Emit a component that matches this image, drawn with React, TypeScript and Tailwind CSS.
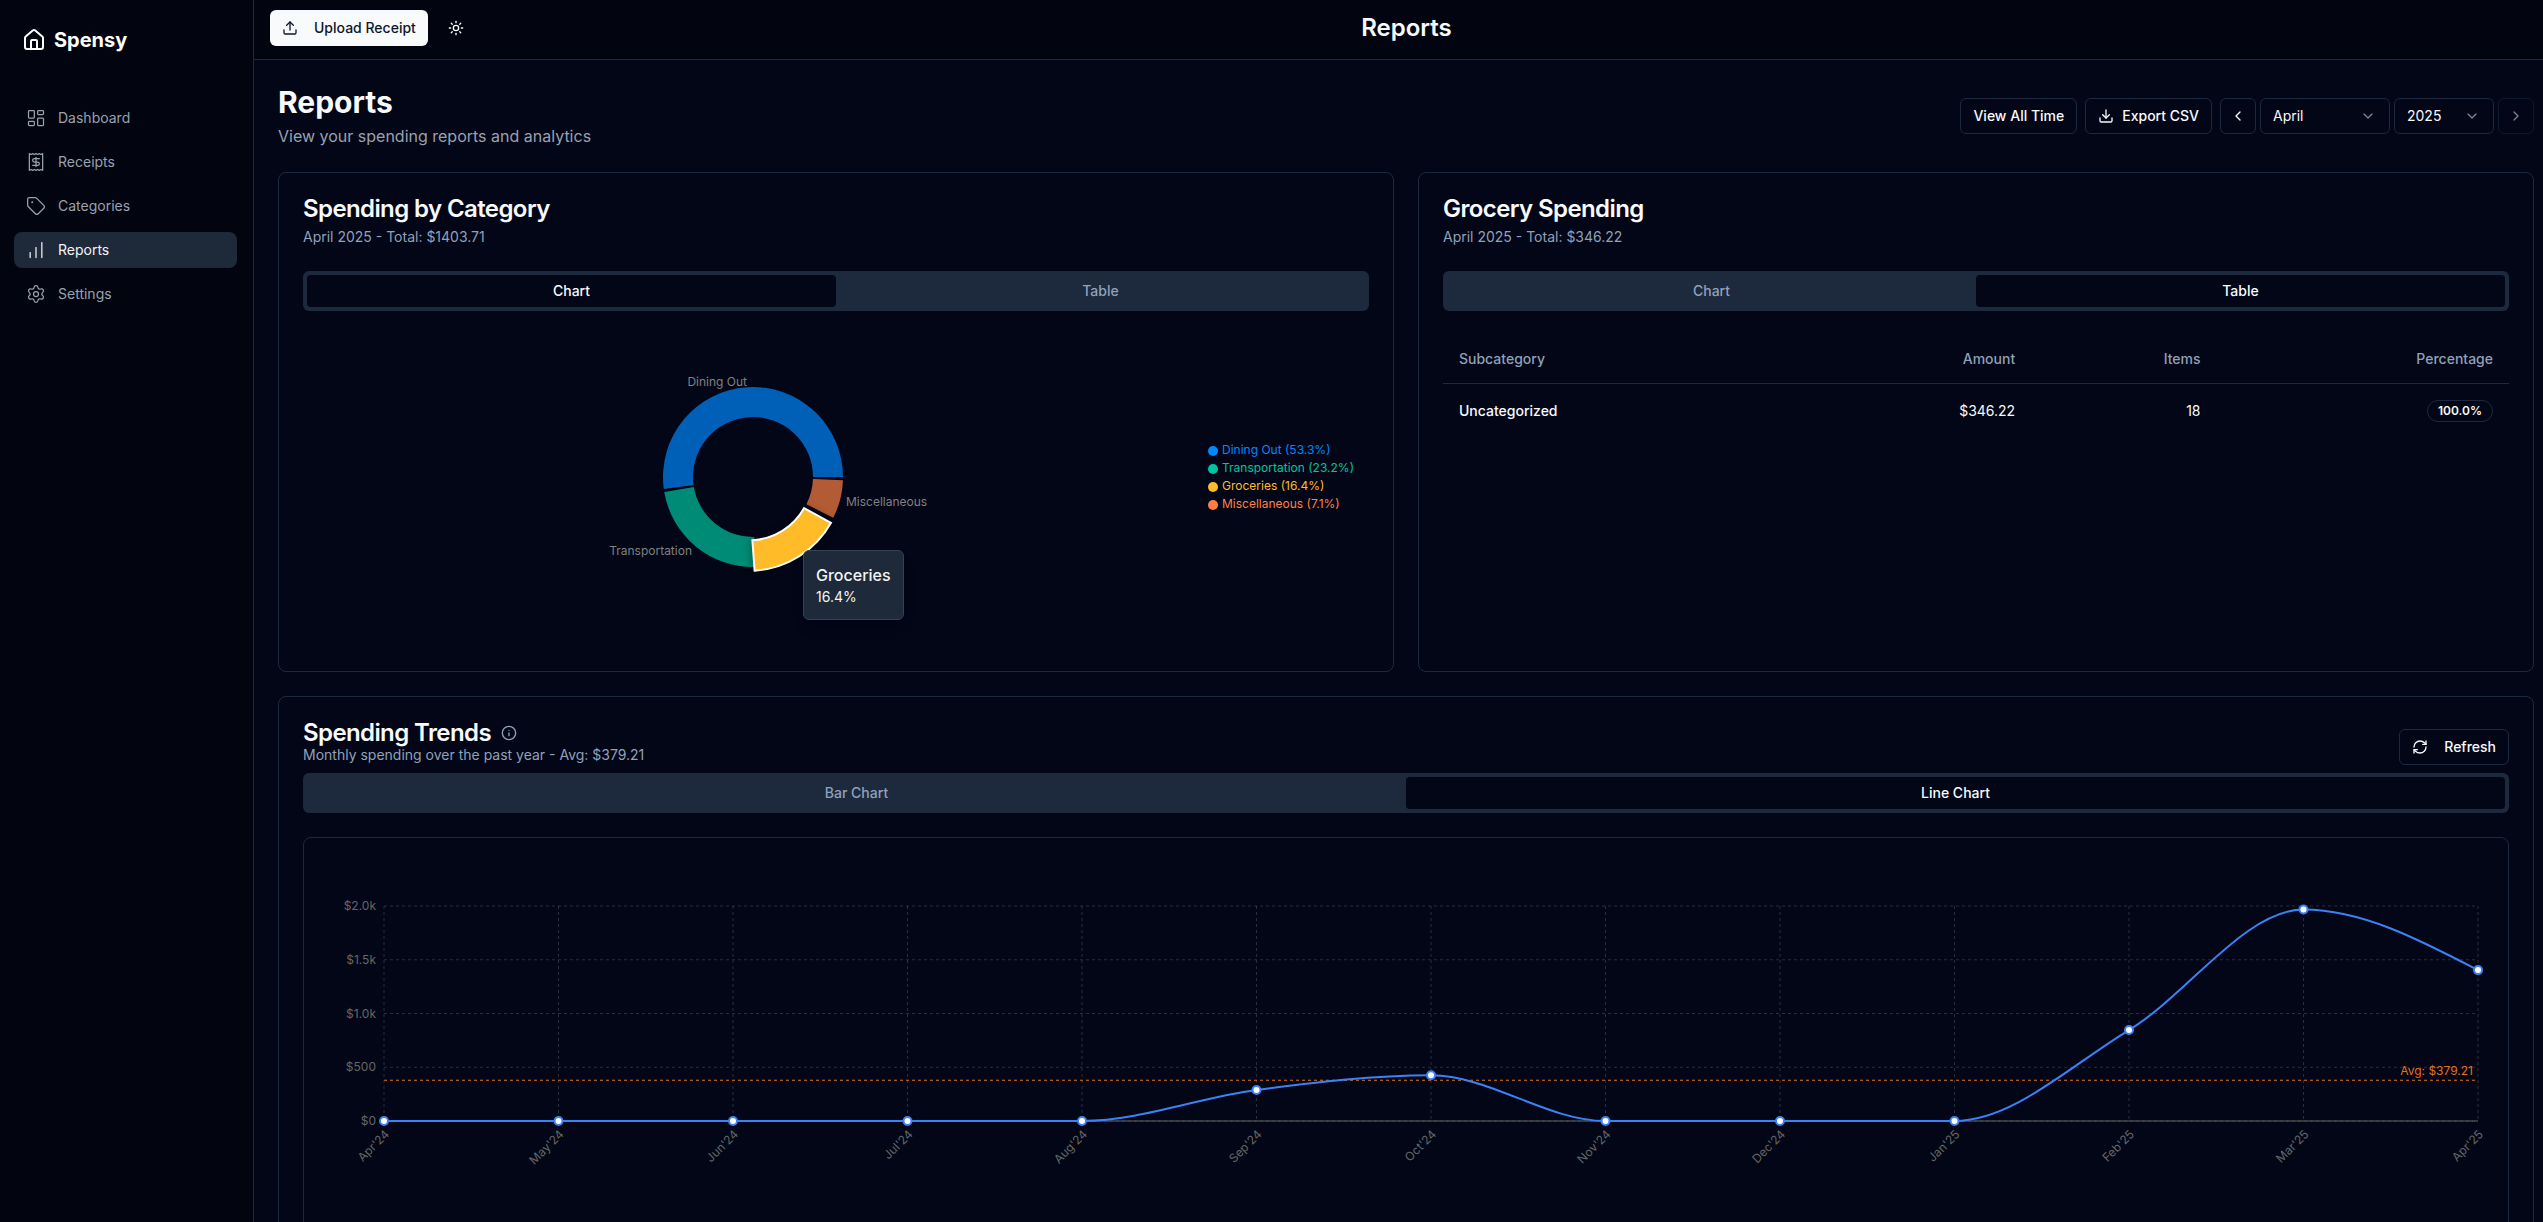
import React, { useLayoutEffect, useRef, useState } from 'react';
import {
  ChartNoAxesColumnIncreasing,
  ChevronDown,
  ChevronLeft,
  ChevronRight,
  Download,
  House,
  Info,
  LayoutDashboard,
  Receipt,
  RefreshCw,
  Settings,
  Sun,
  Tag,
  Upload,
} from 'lucide-react';

const navItems = [
  { label: 'Dashboard', icon: LayoutDashboard },
  { label: 'Receipts', icon: Receipt },
  { label: 'Categories', icon: Tag },
  { label: 'Reports', icon: ChartNoAxesColumnIncreasing, active: true },
  { label: 'Settings', icon: Settings },
];

const categories = [
  { name: 'Dining Out', percent: 53.3, color: '#0088FE' },
  { name: 'Transportation', percent: 23.2, color: '#00C49F' },
  { name: 'Groceries', percent: 16.4, color: '#FFBB28' },
  { name: 'Miscellaneous', percent: 7.1, color: '#FF8042' },
];

const trends = [
  { month: "Apr'24", total: 0 },
  { month: "May'24", total: 0 },
  { month: "Jun'24", total: 0 },
  { month: "Jul'24", total: 0 },
  { month: "Aug'24", total: 0 },
  { month: "Sep'24", total: 288 },
  { month: "Oct'24", total: 425 },
  { month: "Nov'24", total: 0 },
  { month: "Dec'24", total: 0 },
  { month: "Jan'25", total: 0 },
  { month: "Feb'25", total: 846 },
  { month: "Mar'25", total: 1967 },
  { month: "Apr'25", total: 1403.71 },
];

const yTicks = [
  { value: 0, label: '$0' },
  { value: 500, label: '$500' },
  { value: 1000, label: '$1.0k' },
  { value: 1500, label: '$1.5k' },
  { value: 2000, label: '$2.0k' },
];

const average = 379.21;

const outlineButton =
  'flex h-9 items-center gap-2 rounded-md border border-slate-800 px-3 text-sm font-medium text-slate-50 hover:bg-slate-800';

type Point = { x: number; y: number };

// Monotone cubic interpolation, so the curve never dips below zero
const monotonePath = (pts: Point[]) => {
  const n = pts.length;
  const slopes = pts.slice(1).map((p, i) => (p.y - pts[i].y) / (p.x - pts[i].x));
  const tangents = pts.map((_, i) => {
    if (i === 0 || i === n - 1) return 0;
    const a = slopes[i - 1];
    const b = slopes[i];
    if (a * b <= 0) return 0;
    return Math.sign(a) * Math.min(Math.abs(a), Math.abs(b), Math.abs(a + b) / 4) * 2;
  });
  tangents[0] = (3 * slopes[0] - tangents[1]) / 2;
  tangents[n - 1] = (3 * slopes[n - 2] - tangents[n - 2]) / 2;
  let d = `M${pts[0].x},${pts[0].y}`;
  for (let i = 1; i < n; i++) {
    const h = (pts[i].x - pts[i - 1].x) / 3;
    d += `C${pts[i - 1].x + h},${pts[i - 1].y + h * tangents[i - 1]},${pts[i].x - h},${pts[i].y - h * tangents[i]},${pts[i].x},${pts[i].y}`;
  }
  return d;
};

const sectorPath = (start: number, end: number, inner: number, outer: number) => {
  const at = (deg: number, r: number) => {
    const rad = (deg * Math.PI) / 180;
    return `${r * Math.cos(rad)},${-r * Math.sin(rad)}`;
  };
  const large = end - start > 180 ? 1 : 0;
  return `M${at(start, outer)}A${outer},${outer},0,${large},0,${at(end, outer)}L${at(end, inner)}A${inner},${inner},0,${large},1,${at(start, inner)}Z`;
};

const Tabs: React.FC<{ items: string[]; active: string }> = ({ items, active }) => (
  <div role="tablist" className="grid h-10 grid-cols-2 rounded-md bg-slate-800 p-1">
    {items.map((item) => (
      <button
        key={item}
        role="tab"
        aria-selected={item === active}
        className={
          item === active
            ? 'rounded-sm bg-[#020617] text-sm font-medium text-slate-50'
            : 'rounded-sm text-sm font-medium text-slate-400'
        }
      >
        {item}
      </button>
    ))}
  </div>
);

const DonutChart: React.FC = () => {
  const gap = 2;
  const available = 360 - gap * categories.length;
  let angle = 0;
  const sectors = categories.map((c) => {
    const start = angle;
    const end = start + (available * c.percent) / 100;
    angle = end + gap;
    return { ...c, start, end };
  });

  return (
    <div className="mt-4 flex h-[300px] items-center">
      <div className="relative flex flex-1 justify-center">
        <svg width="400" height="300" viewBox="-200 -150 400 300" className="overflow-visible text-xs">
          {sectors
            .filter((s) => s.name !== 'Groceries')
            .map((s) => (
              <path key={s.name} d={sectorPath(s.start, s.end, 60, 90)} fill={s.color} opacity="0.7" />
            ))}
          <path
            d="M1.6 93.8A94.5 94.5 0 0 0 78 45.8L51 31.2A63 63 0 0 1 -0.6 63.2Z"
            fill="#FFBB28"
            stroke="#fff"
            strokeWidth="2"
            className="drop-shadow-[0_0_4px_rgba(0,0,0,0.4)]"
          />
          <text x="-6" y="-91" textAnchor="end" fill="#808080">Dining Out</text>
          <text x="-61" y="78" textAnchor="end" fill="#808080">Transportation</text>
          <text x="93" y="29" fill="#808080">Miscellaneous</text>
        </svg>
        <div className="absolute top-[223px] left-1/2 ml-[50px] rounded-md border border-gray-700 bg-gray-800 p-3 text-gray-100 shadow-lg">
          <p className="font-medium">Groceries</p>
          <p className="text-sm">16.4%</p>
        </div>
      </div>
      <ul className="w-[166px] pl-[5px] text-xs">
        {categories.map((c) => (
          <li key={c.name} className="flex h-[18px] items-center gap-1" style={{ color: c.color }}>
            <span className="mt-0.5 size-2.5 rounded-full bg-current" />
            {c.name} ({c.percent}%)
          </li>
        ))}
      </ul>
    </div>
  );
};

const TrendChart: React.FC = () => {
  const ref = useRef<HTMLDivElement>(null);
  const [width, setWidth] = useState(2172);

  useLayoutEffect(() => {
    const el = ref.current;
    if (!el) return;
    const observer = new ResizeObserver(() => setWidth(el.clientWidth));
    observer.observe(el);
    setWidth(el.clientWidth);
    return () => observer.disconnect();
  }, []);

  const left = 64;
  const right = width - 14;
  const top = 52;
  const bottom = 267;
  const x = (i: number) => left + ((right - left) * i) / (trends.length - 1);
  const y = (v: number) => bottom - ((bottom - top) * v) / 2000;
  const points = trends.map((t, i) => ({ x: x(i), y: y(t.total) }));

  return (
    <div ref={ref}>
      <svg width={width} height="400" className="block text-xs">
        <g stroke="#ccc" strokeOpacity="0.2" strokeDasharray="3 3">
          {yTicks.map((t) => (
            <line key={t.label} x1={left} x2={right} y1={y(t.value)} y2={y(t.value)} />
          ))}
          {trends.map((t, i) => (
            <line key={t.month} x1={x(i)} x2={x(i)} y1={top} y2={bottom} />
          ))}
        </g>
        <line x1={left} x2={right} y1={bottom} y2={bottom} stroke="#666" />
        {yTicks.map((t) => (
          <text key={t.label} x={left - 8} y={y(t.value) + 4} textAnchor="end" fill="#666">
            {t.label}
          </text>
        ))}
        {trends.map((t, i) => (
          <text
            key={t.month}
            x={x(i)}
            y={bottom + 8}
            dy="0.71em"
            textAnchor="end"
            fill="#666"
            transform={`rotate(-45 ${x(i)} ${bottom + 8})`}
          >
            {t.month}
          </text>
        ))}
        <line x1={left} x2={right} y1={y(average)} y2={y(average)} stroke="#e8701a" strokeDasharray="3 3" />
        <text x={right - 5} y={y(average) - 5} textAnchor="end" fill="#e8701a">
          Avg: ${average}
        </text>
        <path d={monotonePath(points)} fill="none" stroke="#3b82f6" strokeWidth="2" />
        {points.map((p) => (
          <circle key={p.x} cx={p.x} cy={p.y} r="4" fill="#fff" stroke="#3b82f6" strokeWidth="2" />
        ))}
      </svg>
    </div>
  );
};

const Sidebar: React.FC = () => (
  <aside className="flex w-[254px] shrink-0 flex-col border-r border-gray-800 bg-[#02050f] pr-4 pl-3.5">
    <a href="#" className="flex h-20 items-center gap-2 px-2 text-xl font-bold text-white">
      <House className="size-6" />
      Spensy
    </a>
    <nav className="mt-5 space-y-2">
      {navItems.map(({ label, icon: Icon, active }) => (
        <a
          key={label}
          href="#"
          className={
            active
              ? 'flex h-9 items-center gap-3 rounded-lg bg-gray-800 px-3 text-sm text-gray-100'
              : 'flex h-9 items-center gap-3 rounded-lg px-3 text-sm text-gray-400'
          }
        >
          <Icon className="size-5" strokeWidth={1.5} />
          {label}
        </a>
      ))}
    </nav>
  </aside>
);

const ReportsPage: React.FC = () => {
  return (
    <div className="flex h-screen overflow-hidden bg-[#020617] font-['Inter',sans-serif] text-slate-50">
      <Sidebar />
      <div className="flex min-w-0 flex-1 flex-col">
        <header className="grid h-15 shrink-0 grid-cols-[1fr_auto_1fr] items-center border-b border-gray-800 bg-[#02050f] pb-1 pl-4">
          <div className="flex items-center gap-2">
            <button className="flex h-9 items-center gap-4 rounded-md bg-slate-50 px-3 text-sm font-medium text-slate-900">
              <Upload className="size-4" />
              Upload Receipt
            </button>
            <button aria-label="Toggle theme" className="flex size-10 items-center justify-center">
              <Sun className="size-4" />
            </button>
          </div>
          <p className="text-2xl font-semibold">Reports</p>
        </header>

        <main className="min-h-0 flex-1 space-y-6 overflow-y-auto pt-6 pr-[9px] pl-6 [scrollbar-width:none]">
          <div className="flex items-center justify-between">
            <div>
              <h1 className="text-3xl font-bold">Reports</h1>
              <p className="mt-1 text-gray-400">View your spending reports and analytics</p>
            </div>
            <div className="flex items-center gap-2">
              <button className={outlineButton}>View All Time</button>
              <button className={outlineButton}>
                <Download className="size-4" />
                Export CSV
              </button>
              <div className="flex gap-1">
                <button
                  aria-label="Previous month"
                  className="flex size-9 items-center justify-center rounded-md border border-slate-800"
                >
                  <ChevronLeft className="size-4" />
                </button>
                <div className="relative w-[130px]">
                  <select
                    aria-label="Month"
                    className="h-9 w-full appearance-none rounded-md border border-slate-800 bg-[#020617] px-3 text-sm"
                  >
                    <option>April</option>
                  </select>
                  <ChevronDown className="pointer-events-none absolute top-2.5 right-3.5 size-4 opacity-50" />
                </div>
                <div className="relative w-[100px]">
                  <select
                    aria-label="Year"
                    className="h-9 w-full appearance-none rounded-md border border-slate-800 bg-[#020617] px-3 text-sm"
                  >
                    <option>2025</option>
                  </select>
                  <ChevronDown className="pointer-events-none absolute top-2.5 right-3.5 size-4 opacity-50" />
                </div>
                <button
                  aria-label="Next month"
                  disabled
                  className="flex size-9 items-center justify-center rounded-md border border-slate-800 opacity-50"
                >
                  <ChevronRight className="size-4" />
                </button>
              </div>
            </div>
          </div>

          <div className="grid grid-cols-2 gap-6">
            <section className="min-h-[500px] rounded-lg border border-slate-800 p-6">
              <h2 className="text-2xl leading-none font-semibold tracking-tight">Spending by Category</h2>
              <p className="mt-1.5 mb-6 text-sm text-slate-400">April 2025 - Total: $1403.71</p>
              <Tabs items={['Chart', 'Table']} active="Chart" />
              <DonutChart />
            </section>

            <section className="rounded-lg border border-slate-800 p-6">
              <h2 className="text-2xl leading-none font-semibold tracking-tight">Grocery Spending</h2>
              <p className="mt-1.5 mb-6 text-sm text-slate-400">April 2025 - Total: $346.22</p>
              <Tabs items={['Chart', 'Table']} active="Table" />
              <table className="mt-6 w-full text-sm">
                <thead>
                  <tr className="h-12 border-b border-slate-800 text-slate-400">
                    <th className="px-4 text-left font-medium">Subcategory</th>
                    <th className="px-4 text-right font-medium">Amount</th>
                    <th className="px-4 text-right font-medium">Items</th>
                    <th className="px-4 text-right font-medium">Percentage</th>
                  </tr>
                </thead>
                <tbody>
                  <tr>
                    <td className="p-4 font-medium">Uncategorized</td>
                    <td className="p-4 text-right">$346.22</td>
                    <td className="p-4 text-right">18</td>
                    <td className="p-4 text-right">
                      <span className="inline-flex rounded-full border border-slate-800 px-2.5 py-0.5 text-xs font-semibold">
                        100.0%
                      </span>
                    </td>
                  </tr>
                </tbody>
              </table>
            </section>
          </div>

          <section className="rounded-lg border border-slate-800 p-6">
            <div className="mb-2 flex items-end justify-between">
              <div>
                <div className="flex items-center gap-2.5">
                  <h2 className="text-2xl leading-none font-semibold tracking-tight">Spending Trends</h2>
                  <Info className="size-4 text-slate-400" />
                </div>
                <p className="text-sm text-slate-400">Monthly spending over the past year - Avg: $379.21</p>
              </div>
              <button className="flex h-9 items-center gap-4 rounded-md border border-slate-800 px-3 text-sm font-medium">
                <RefreshCw className="size-4" />
                Refresh
              </button>
            </div>
            <Tabs items={['Bar Chart', 'Line Chart']} active="Line Chart" />
            <div className="mt-6 rounded-lg border border-slate-800 p-4">
              <TrendChart />
            </div>
          </section>
        </main>
      </div>
    </div>
  );
};

export default ReportsPage;
